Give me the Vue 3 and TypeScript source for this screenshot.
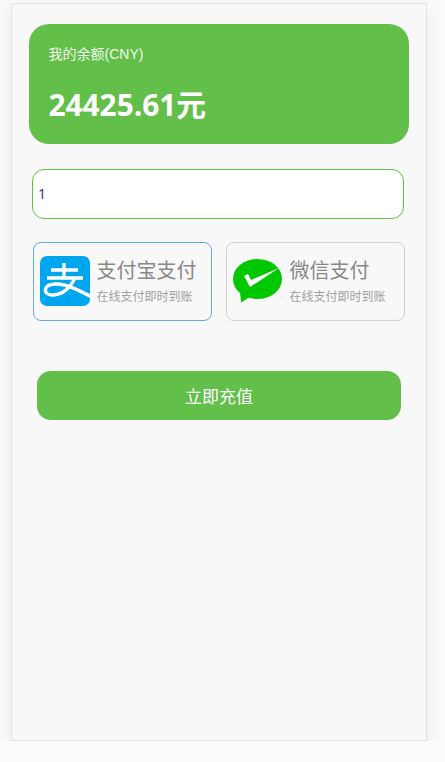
<script setup lang="ts">
import { ref } from "vue";

const amount = ref("1");
const note = "在线支付即时到账";
</script>

<template>
  <main class="panel">
    <section class="balance">
      <p class="balance-label">我的余额(CNY)</p>
      <p class="balance-value">24425.61元</p>
    </section>

    <input v-model="amount" class="amount" type="text" />

    <div class="methods">
      <div class="method active">
        <svg class="icon alipay" viewBox="0 0 50 50">
          <defs>
            <clipPath id="alipay-clip">
              <rect width="50" height="50" rx="7" />
            </clipPath>
          </defs>
          <rect width="50" height="50" rx="7" fill="#00a6ed" />
          <g clip-path="url(#alipay-clip)" fill="none" stroke="#fff" stroke-width="3.4">
            <path d="M11 14H38M24 7V22M7 22H43" />
            <path d="M35 22C31 30 24 38 14 39C8 39.500 4.500 36.500 5.500 33C6.500 29.500 11 28 16 28C27 28 38 34 52 41" />
          </g>
        </svg>
        <div class="method-text">
          <span class="method-name">支付宝支付</span>
          <span class="method-note">{{ note }}</span>
        </div>
      </div>
      <div class="method">
        <svg class="icon wechat" viewBox="0 0 49 44">
          <ellipse cx="24.500" cy="20" rx="24.500" ry="20" fill="#00c800" />
          <path d="M7 34L8.300 43.500L18 37Z" fill="#00c800" />
          <path d="M11 17L15 15L18 21L46 9L17 28Z" fill="#fff" />
        </svg>
        <div class="method-text">
          <span class="method-name">微信支付</span>
          <span class="method-note">{{ note }}</span>
        </div>
      </div>
    </div>

    <button class="submit" type="button">立即充值</button>
  </main>
</template>

<style scoped>
.panel {
  box-sizing: border-box;
  width: 416px;
  height: 738px;
  margin: 3px 0 0 11px;
  padding: 20px 17px 0;
  background: #f8f8f8;
  border: 1px solid #e2e2e2;
  box-shadow: 0 5px 20px rgba(0, 0, 0, 0.08);
  font-family: "Open Sans", "Noto Sans CJK SC", sans-serif;
}
.balance {
  box-sizing: border-box;
  height: 120px;
  padding: 20px 19.500px 0;
  border-radius: 20px;
  background: #62bf4a;
  color: #fff;
}
.balance-label {
  margin: 0;
  font-family: "Liberation Sans", "Noto Sans CJK SC", sans-serif;
  font-size: 14px;
  line-height: 20px;
  color: #f1f8ec;
}
.balance-value {
  margin: 21px 0 0;
  font-size: 29.800px;
  line-height: 40px;
  font-weight: 700;
}
.amount {
  display: block;
  box-sizing: border-box;
  width: 372px;
  height: 50px;
  margin: 25px 0 0 3px;
  padding: 0 5px 2px;
  border: 1px solid #62bf4a;
  border-radius: 12px;
  outline: none;
  background: #fff;
  color: #1f1f8f;
  font-family: "Open Sans", sans-serif;
  font-size: 14px;
}
.methods {
  display: flex;
  gap: 14px;
  margin: 23px 0 0 4px;
}
.method {
  box-sizing: border-box;
  display: flex;
  align-items: center;
  gap: 7px;
  width: 179px;
  height: 79px;
  padding: 0 6px;
  border: 1px solid #d2d2d2;
  border-radius: 8px;
}
.method.active {
  border-color: #64a9f2;
}
.icon {
  flex: none;
}
.icon.alipay {
  width: 50px;
  height: 50px;
  margin-top: -1px;
}
.icon.wechat {
  width: 49px;
  height: 44px;
  margin: -1px 1px 0 0;
}
.method-text {
  display: flex;
  flex-direction: column;
  gap: 4px;
  margin-left: -0.500px;
}
.method-name {
  margin-top: -1px;
  font-size: 20px;
  line-height: 28px;
  color: #888;
}
.method-note {
  font-size: 12px;
  line-height: 16px;
  color: #a0a0a0;
}
.submit {
  display: block;
  width: 364px;
  height: 49px;
  margin: 50px 0 0 8px;
  padding: 0 0 1px;
  border: none;
  border-radius: 14px;
  background: #62bf4a;
  color: #fff;
  font-family: inherit;
  font-size: 17px;
}
</style>

<style>
html,
body {
  background: #fbfbfb;
}
</style>
